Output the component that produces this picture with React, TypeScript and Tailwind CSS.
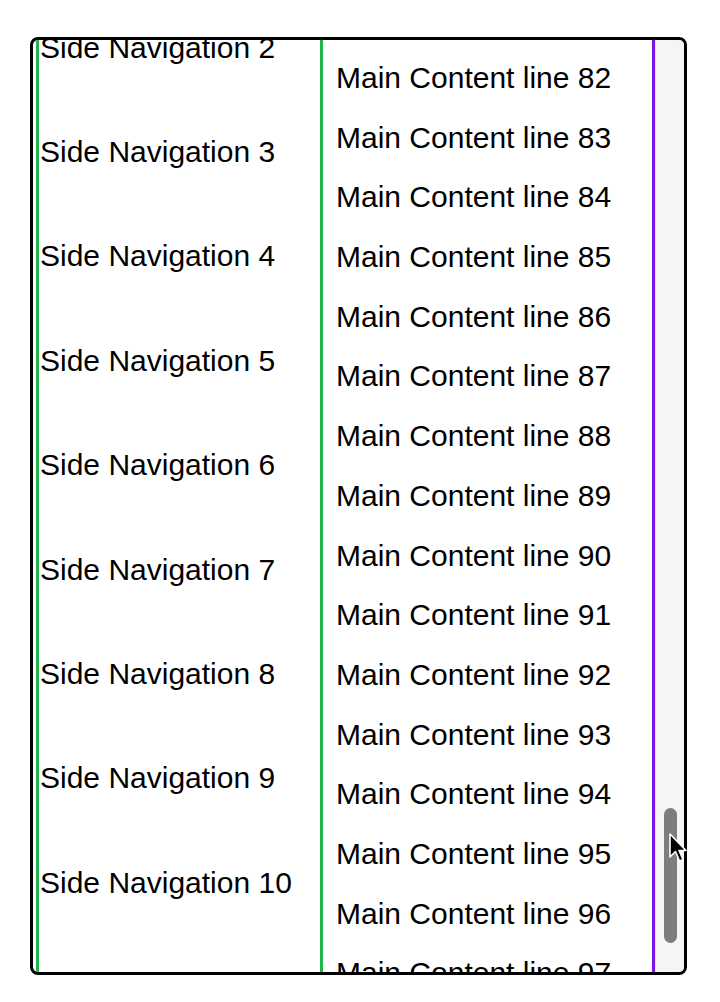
const sideItems = [2, 3, 4, 5, 6, 7, 8, 9, 10]
const mainLines = Array.from({ length: 16 }, (_, i) => 82 + i)

function Cursor() {
  return (
    <svg
      className="pointer-events-none absolute left-[668px] top-[832px]"
      width="20"
      height="32"
      viewBox="0 0 20 32"
    >
      <path
        d="M2 2 L2 25 L7.5 19.5 L11.5 29 L15 27.5 L11 18.5 L18 18.5 Z"
        fill="#000"
        stroke="#fff"
        strokeWidth="1.6"
        strokeLinejoin="round"
      />
    </svg>
  )
}

function Scrollbar() {
  return (
    <div className="flex w-[29px] shrink-0 justify-center border-l border-[#e6e6e6] bg-[#f5f5f5]">
      <div className="mt-[768px] h-[135px] w-[13px] rounded-full bg-[#7d7d7d]" />
    </div>
  )
}

export default function App() {
  return (
    <div className="relative h-[1002px] w-[720px] bg-white pt-[37px] font-['Liberation_Sans',Arial,sans-serif] text-black">
      <div className="ml-[30px] flex h-[938px] w-[657px] overflow-hidden rounded-[8px] border-[3px] border-black">
        <div className="flex flex-1 overflow-hidden pl-[3px]">
          <div className="w-[287px] shrink-0 overflow-hidden border-x-[3px] border-[#22b34a] pl-[1px]">
            <div className="-mt-[44.3px] flex flex-col">
              {sideItems.map((n) => (
                <div key={n} className="h-[104.4px] whitespace-nowrap text-[30px] leading-[104.4px]">
                  Side Navigation {n}
                </div>
              ))}
            </div>
          </div>
          <div className="flex-1 overflow-hidden border-r-[3px] border-[#7b16e8] pl-[13px] pt-[8px]">
            {mainLines.map((n) => (
              <div key={n} className="h-[59.7px] whitespace-nowrap text-[30px] leading-[59.7px]">
                Main Content line {n}
              </div>
            ))}
          </div>
        </div>
        <Scrollbar />
      </div>
      <Cursor />
    </div>
  )
}
